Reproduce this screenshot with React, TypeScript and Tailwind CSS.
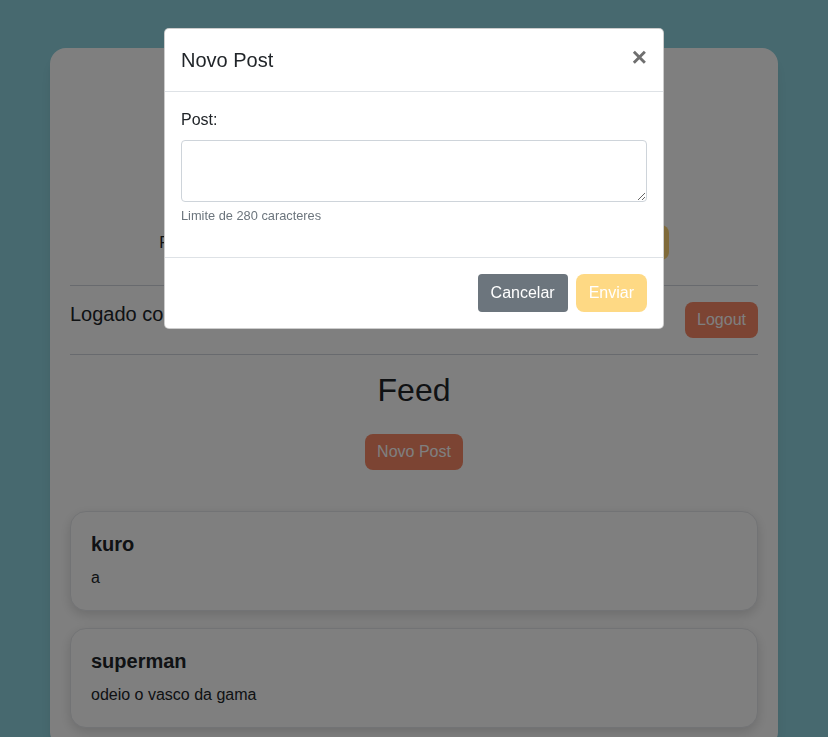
import { useState } from 'react';

const posts = [
  { user: 'kuro', text: 'a' },
  { user: 'superman', text: 'odeio o vasco da gama' },
];

const App = () => {
  const [open, setOpen] = useState(true);
  const [text, setText] = useState('');

  return (
    <div className="min-h-screen bg-[#8fd3df] px-[50px] pt-[48px] pb-10 font-['Liberation_Sans',Arial,sans-serif] text-[#212529]">
      <div className="rounded-2xl bg-white p-5 shadow-lg">
        {/* Header (behind the modal) */}
        <div className="flex h-[157px] flex-col items-center justify-center gap-3">
          <h1 className="text-[40px] leading-tight">Mini Twitter</h1>
          <p className="text-base">Compartilhe o que está pensando</p>
        </div>

        {/* Search */}
        <div className="flex h-[35px] items-center justify-center gap-3">
          <label className="text-base">Pesquisar usuário:</label>
          <input className="h-[35px] w-[271px] rounded border border-[#ced4da] px-3" />
          <button className="h-[35px] rounded-lg bg-[#ffd574] px-4 text-white">Buscar</button>
        </div>

        <hr className="mt-[25px] border-gray-300" />

        <div className="flex items-start justify-between py-4">
          <span className="text-xl leading-6">Logado como kuro</span>
          <button className="h-9 rounded-lg bg-[#f88866] px-3 text-base text-white">Logout</button>
        </div>

        <hr className="border-gray-300" />

        <h2 className="mt-4 text-center text-[32px] leading-[38px]">Feed</h2>
        <div className="mt-[25px] flex justify-center">
          <button onClick={() => setOpen(true)} className="h-9 rounded-lg bg-[#f88866] px-3 text-base text-white">
            Novo Post
          </button>
        </div>

        <div className="mt-[41px] flex flex-col gap-[17px]">
          {posts.map((p, i) => (
            <div key={i} className="rounded-2xl border border-gray-200 bg-white p-5 shadow-[0_4px_12px_rgba(0,0,0,0.15)]">
              <h3 className="mb-[10px] text-xl font-bold leading-6">{p.user}</h3>
              <p className="text-base leading-6">{p.text}</p>
            </div>
          ))}
        </div>
      </div>

      {/* Modal */}
      {open && (
        <div className="fixed inset-0 z-50 bg-black/50">
          <div className="absolute left-1/2 top-[28px] w-[500px] -translate-x-1/2 rounded-[5px] border border-black/20 bg-white">
            <div className="flex items-start justify-between border-b border-[#dee2e6] p-4">
              <h5 className="text-xl leading-[30px]">Novo Post</h5>
              <button
                onClick={() => setOpen(false)}
                className="-mt-[3px] text-[26px] font-bold leading-[30px] text-[#6f6f6f]"
              >
                ×
              </button>
            </div>
            <div className="p-4">
              <div className="mb-4">
                <label className="mb-2 block text-base leading-6">Post:</label>
                <textarea
                  value={text}
                  onChange={(e) => setText(e.target.value)}
                  className="block h-[62px] w-full rounded border border-[#ced4da] px-3 py-1.5"
                />
                <small className="mt-1 block text-[12.8px] leading-[19px] text-[#6c757d]">Limite de 280 caracteres</small>
              </div>
            </div>
            <div className="flex justify-end gap-2 border-t border-[#dee2e6] p-4">
              <button onClick={() => setOpen(false)} className="h-[38px] rounded bg-[#6c757d] px-[13px] text-base text-white">
                Cancelar
              </button>
              <button disabled className="h-[38px] rounded-lg bg-[#fed984] px-[13px] text-base text-white">
                Enviar
              </button>
            </div>
          </div>
        </div>
      )}
    </div>
  );
};

export default App;
